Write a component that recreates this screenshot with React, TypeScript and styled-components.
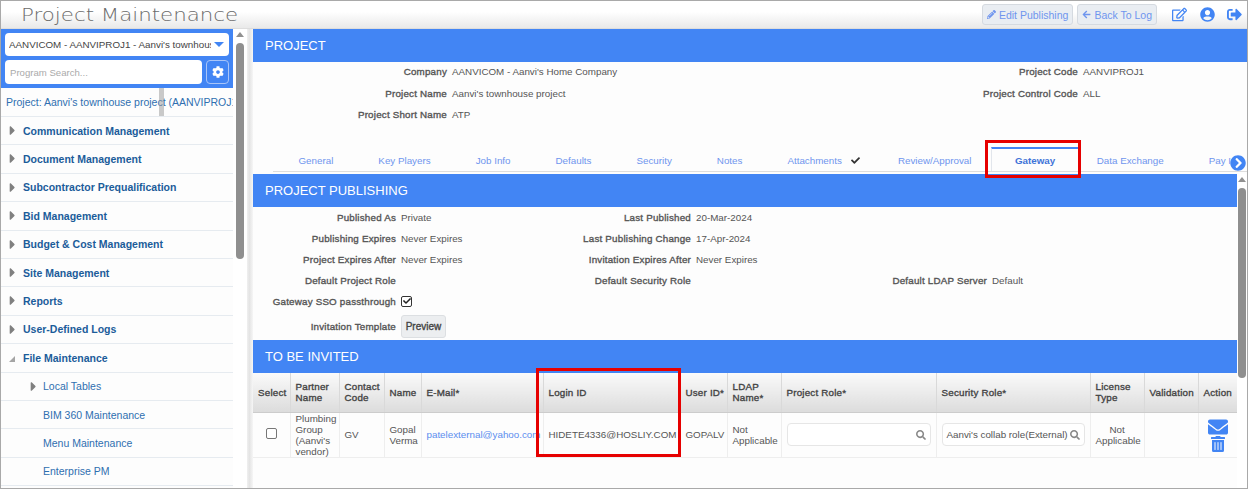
import { FunctionComponent } from 'react';
import styled, { createGlobalStyle } from 'styled-components';
import {
  FaArrowLeft,
  FaCaretRight,
  FaCheck,
  FaChevronCircleRight,
  FaCog,
  FaEnvelope,
  FaPencilAlt,
  FaRegEdit,
  FaSearch,
  FaSignOutAlt,
  FaTrashAlt,
  FaUserCircle,
} from 'react-icons/fa';

const BLUE = '#4285f4';

const GlobalStyle = createGlobalStyle`
  html, body {
    margin: 0;
    padding: 0;
    background: #fff;
  }
  * {
    box-sizing: border-box;
  }
`;

const Frame = styled.div`
  position: relative;
  width: 1248px;
  height: 489px;
  border: 1px solid #a9a9a9;
  overflow: hidden;
  display: flex;
  flex-direction: column;
  font-family: 'Liberation Sans', Arial, sans-serif;
  font-size: 9.8px;
  color: #555;
  background: #fdfdfd;
`;

const Header = styled.header`
  height: 28px;
  flex: none;
  display: flex;
  align-items: center;
  padding-left: 20px;
  background: linear-gradient(#fff 40%, #e9e9e9);
  border-bottom: 1px solid #ddd;
`;

const Title = styled.div`
  font-family: 'DejaVu Sans', sans-serif;
  font-size: 17px;
  font-weight: 200;
  color: #6b6b6b;
  transform: scaleX(1.255);
  transform-origin: left center;
  white-space: nowrap;
`;

const HeaderActions = styled.div`
  margin-left: auto;
  display: flex;
  align-items: center;
`;

const HeaderButton = styled.button`
  height: 21px;
  margin-right: 4px;
  padding: 0 4px;
  display: flex;
  align-items: center;
  gap: 3px;
  font-family: inherit;
  font-size: 10.5px;
  color: #6f95ee;
  background: #e9edf2;
  border: 1px solid #d5dae0;
  border-radius: 3px;
  svg {
    font-size: 9px;
  }
`;

const HeaderIcon = styled.span<{ $gap: number }>`
  display: flex;
  margin-left: ${(p) => p.$gap}px;
  color: ${BLUE};
  font-size: 15px;
`;

const Body = styled.div`
  flex: 1;
  min-height: 0;
  display: flex;
`;

const Sidebar = styled.aside`
  position: relative;
  width: 232px;
  flex: none;
  overflow: hidden;
`;

const SidebarTop = styled.div`
  height: 59px;
  padding: 4px 4px 0;
  background: ${BLUE};
  display: flex;
  flex-direction: column;
  gap: 4px;
`;

const ProjectSelect = styled.div`
  height: 23px;
  padding: 0 5px 0 4px;
  display: flex;
  align-items: center;
  justify-content: space-between;
  color: #444;
  background: #fff;
  border-radius: 4px;
  white-space: nowrap;
  overflow: hidden;
`;

const SelectText = styled.span`
  width: 202px;
  overflow: hidden;
`;

const Caret = styled.span`
  width: 0;
  height: 0;
  border-left: 5px solid transparent;
  border-right: 5px solid transparent;
  border-top: 5px solid ${BLUE};
`;

const SearchRow = styled.div`
  display: flex;
  gap: 4px;
`;

const SearchBox = styled.div`
  width: 197px;
  height: 24px;
  padding-left: 5px;
  display: flex;
  align-items: center;
  font-size: 9.6px;
  color: #aaa;
  background: #fff;
  border-radius: 4px;
`;

const GearButton = styled.div`
  width: 23px;
  height: 24px;
  display: flex;
  align-items: center;
  justify-content: center;
  color: #fff;
  font-size: 12px;
  border: 1px solid #a9c5f8;
  border-radius: 4px;
`;

const ProjectLink = styled.div`
  height: 29px;
  padding-left: 5px;
  display: flex;
  align-items: center;
  color: #2f6fb0;
  font-size: 10.5px;
  white-space: nowrap;
  overflow: hidden;
  border-bottom: 1px solid #e6ebf0;
`;

const ScrollGhost = styled.div`
  position: absolute;
  left: 158px;
  top: 59px;
  width: 5px;
  height: 28px;
  background: rgba(150, 150, 150, 0.5);
`;

const NavRow = styled.div<{ $child?: boolean }>`
  height: 28.4px;
  padding-left: ${(p) => (p.$child ? 42 : 22)}px;
  position: relative;
  display: flex;
  align-items: center;
  color: ${(p) => (p.$child ? '#2f6fb0' : '#1b5c9a')};
  font-size: 10.5px;
  font-weight: ${(p) => (p.$child ? 400 : 700)};
  white-space: nowrap;
  border-bottom: 1px solid #e6ebf0;
`;

const NavArrow = styled.span<{ $child?: boolean }>`
  position: absolute;
  left: ${(p) => (p.$child ? 25 : 4)}px;
  top: 6px;
  display: flex;
  color: #808080;
  font-size: 15px;
`;

const NavOpenArrow = styled.span`
  position: absolute;
  left: 8px;
  top: 12px;
  width: 0;
  height: 0;
  border-left: 6px solid transparent;
  border-bottom: 6px solid #a5a5a5;
`;

const LeftScroll = styled.div`
  width: 14px;
  flex: none;
  padding: 3px 2px 0;
  background: #fff;
`;

const ScrollUp = styled.div`
  width: 0;
  height: 0;
  margin: 0 auto 6px;
  border-left: 4px solid transparent;
  border-right: 4px solid transparent;
  border-bottom: 5px solid #909090;
`;

const ScrollThumb = styled.div<{ $height: number }>`
  width: 8px;
  height: ${(p) => p.$height}px;
  margin: 0 auto;
  background: #8f8f8f;
  border-radius: 4px;
`;

const Splitter = styled.div`
  width: 6px;
  flex: none;
  background: linear-gradient(90deg, #f0f0f0, #e4e4e4 40%, #f6f6f6);
`;

const Main = styled.main`
  position: relative;
  flex: 1;
  min-width: 0;
  display: flex;
  flex-direction: column;
`;

const SectionBar = styled.div<{ $gap?: number }>`
  height: 33px;
  flex: none;
  margin-top: ${(p) => p.$gap ?? 0}px;
  padding-left: 12px;
  display: flex;
  align-items: center;
  color: #fff;
  font-size: 13px;
  background: ${BLUE};
`;

const FieldGrid = styled.div<{ $columns: string; $rows?: string; $top: number; $rowGap: number }>`
  display: grid;
  grid-template-columns: ${(p) => p.$columns};
  grid-template-rows: ${(p) => p.$rows ?? 'none'};
  grid-auto-rows: 13px;
  row-gap: ${(p) => p.$rowGap}px;
  column-gap: 5px;
  align-items: center;
  padding-top: ${(p) => p.$top}px;
  white-space: nowrap;
`;

const Label = styled.div`
  text-align: right;
  letter-spacing: 0.2px;
  color: #555;
  -webkit-text-stroke: 0.35px #555;
`;

const Value = styled.div`
  color: #555;
`;

const CheckBox = styled.span<{ $checked?: boolean }>`
  width: 11px;
  height: 11px;
  display: inline-flex;
  align-items: center;
  justify-content: center;
  color: #222;
  font-size: 8px;
  background: #fff;
  border: 1px solid ${(p) => (p.$checked ? '#333' : '#777')};
  border-radius: 2px;
`;

const PreviewButton = styled.button`
  display: block;
  width: 45px;
  height: 23px;
  padding: 0;
  font-family: inherit;
  font-size: 10px;
  color: #444;
  -webkit-text-stroke: 0.35px #444;
  background: #eceef0;
  border: 1px solid #dcdfe2;
  border-radius: 3px;
`;

const TabRow = styled.div`
  height: 37px;
  margin-top: 14px;
  margin-left: 20px;
  padding-left: 3px;
  flex: none;
  display: flex;
  align-items: flex-end;
  border-bottom: 1px solid #ddd;
  white-space: nowrap;
`;

const Tab = styled.div<{ $active?: boolean; $pad?: number; $nudge?: number }>`
  height: 24px;
  margin-left: ${(p) => p.$nudge ?? 0}px;
  padding: 0 ${(p) => p.$pad ?? 21.5}px;
  flex: none;
  display: flex;
  align-items: center;
  gap: 9px;
  color: ${(p) => (p.$active ? '#3f73d8' : '#6f95ee')};
  font-weight: ${(p) => (p.$active ? 700 : 400)};
  border-top: 2px solid ${(p) => (p.$active ? BLUE : 'transparent')};
  border-left: 1px solid ${(p) => (p.$active ? '#e2e6ec' : 'transparent')};
  border-right: 1px solid ${(p) => (p.$active ? '#e2e6ec' : 'transparent')};
  svg {
    color: #333;
    font-size: 9px;
  }
`;

const TabNext = styled.span`
  position: absolute;
  right: 1px;
  top: 126px;
  display: flex;
  color: ${BLUE};
  font-size: 16px;
  background: #fff;
  border-radius: 50%;
`;

const Lower = styled.div`
  margin-top: 2px;
  flex: 1;
  min-height: 0;
  display: flex;
`;

const LowerContent = styled.div`
  width: 984px;
  flex: none;
`;

const RightScroll = styled.div`
  flex: 1;
  padding-top: 3px;
  background: #fff;
`;

const InviteTable = styled.table`
  width: 984px;
  table-layout: fixed;
  border-collapse: collapse;
  color: #555;
`;

const HeadCell = styled.th`
  height: 39px;
  padding: 0 0 0 5px;
  text-align: left;
  font-weight: 400;
  line-height: 11px;
  letter-spacing: 0.2px;
  color: #444;
  -webkit-text-stroke: 0.35px #444;
  background: linear-gradient(#fafafa, #dcdcdc);
  border-right: 1px solid #d9d9d9;
  border-bottom: 1px solid #ccc;
`;

const Cell = styled.td<{ $center?: boolean }>`
  height: 45px;
  padding: 0 5px;
  text-align: ${(p) => (p.$center ? 'center' : 'left')};
  line-height: 11px;
  white-space: normal;
  border-right: 1px solid #eee;
  border-bottom: 1px solid #eee;
`;

const EmailLink = styled.span`
  color: #5b8def;
  white-space: nowrap;
`;

const RoleInput = styled.div`
  height: 23px;
  padding: 0 4px;
  display: flex;
  align-items: center;
  justify-content: space-between;
  white-space: nowrap;
  background: #fff;
  border: 1px solid #e6e6e6;
  border-radius: 4px;
  svg {
    color: #888;
    font-size: 10px;
  }
`;

const ActionIcons = styled.div`
  display: flex;
  flex-direction: column;
  align-items: center;
  color: ${BLUE};
  svg:first-child {
    font-size: 20px;
    margin-bottom: -1px;
  }
  svg:last-child {
    font-size: 16px;
  }
`;

const Callout = styled.div<{ $left: number; $top: number; $width: number; $height: number }>`
  position: absolute;
  left: ${(p) => p.$left}px;
  top: ${(p) => p.$top}px;
  width: ${(p) => p.$width}px;
  height: ${(p) => p.$height}px;
  border: 3px solid #e60000;
  pointer-events: none;
`;

const navItems = [
  'Communication Management',
  'Document Management',
  'Subcontractor Prequalification',
  'Bid Management',
  'Budget & Cost Management',
  'Site Management',
  'Reports',
  'User-Defined Logs',
];

const tabs = ['General', 'Key Players', 'Job Info', 'Defaults', 'Security', 'Notes'];

const columns: [string, number][] = [
  ['Select', 37],
  ['Partner Name', 49],
  ['Contact Code', 45],
  ['Name', 37],
  ['E-Mail*', 122],
  ['Login ID', 137],
  ['User ID*', 47],
  ['LDAP Name*', 54],
  ['Project Role*', 155],
  ['Security Role*', 154],
  ['License Type', 54],
  ['Validation', 54],
  ['Action', 39],
];

const App: FunctionComponent = () => (
  <Frame>
    <GlobalStyle />
    <Header>
      <Title>Project Maintenance</Title>
      <HeaderActions>
        <HeaderButton>
          <FaPencilAlt />
          Edit Publishing
        </HeaderButton>
        <HeaderButton>
          <FaArrowLeft />
          Back To Log
        </HeaderButton>
        <HeaderIcon $gap={11}>
          <FaRegEdit />
        </HeaderIcon>
        <HeaderIcon $gap={13}>
          <FaUserCircle />
        </HeaderIcon>
        <HeaderIcon $gap={12}>
          <FaSignOutAlt />
        </HeaderIcon>
        <HeaderIcon $gap={5} />
      </HeaderActions>
    </Header>
    <Body>
      <Sidebar>
        <SidebarTop>
          <ProjectSelect>
            <SelectText>AANVICOM - AANVIPROJ1 - Aanvi's townhouse project</SelectText>
            <Caret />
          </ProjectSelect>
          <SearchRow>
            <SearchBox>Program Search...</SearchBox>
            <GearButton>
              <FaCog />
            </GearButton>
          </SearchRow>
        </SidebarTop>
        <ProjectLink>Project: Aanvi's townhouse project (AANVIPROJ1)</ProjectLink>
        <ScrollGhost />
        {navItems.map((item) => (
          <NavRow key={item}>
            <NavArrow>
              <FaCaretRight />
            </NavArrow>
            {item}
          </NavRow>
        ))}
        <NavRow>
          <NavOpenArrow />
          File Maintenance
        </NavRow>
        <NavRow $child>
          <NavArrow $child>
            <FaCaretRight />
          </NavArrow>
          Local Tables
        </NavRow>
        <NavRow $child>BIM 360 Maintenance</NavRow>
        <NavRow $child>Menu Maintenance</NavRow>
        <NavRow $child>Enterprise PM</NavRow>
      </Sidebar>
      <LeftScroll>
        <ScrollUp />
        <ScrollThumb $height={216} />
      </LeftScroll>
      <Splitter />
      <Main>
        <SectionBar>PROJECT</SectionBar>
        <FieldGrid $columns="194px 522px 99px 1fr" $top={3} $rowGap={8.5}>
          <Label>Company</Label>
          <Value>AANVICOM - Aanvi's Home Company</Value>
          <Label>Project Code</Label>
          <Value>AANVIPROJ1</Value>
          <Label>Project Name</Label>
          <Value>Aanvi's townhouse project</Value>
          <Label>Project Control Code</Label>
          <Value>ALL</Value>
          <Label>Project Short Name</Label>
          <Value>ATP</Value>
        </FieldGrid>
        <TabRow>
          {tabs.map((tab) => (
            <Tab key={tab}>{tab}</Tab>
          ))}
          <Tab>
            Attachments
            <FaCheck />
          </Tab>
          <Tab $nudge={-7}>Review/Approval</Tab>
          <Tab $active $pad={23} $nudge={-3}>
            Gateway
          </Tab>
          <Tab $nudge={-5}>Data Exchange</Tab>
          <Tab>Pay I</Tab>
        </TabRow>
        <TabNext>
          <FaChevronCircleRight />
        </TabNext>
        <Lower>
          <LowerContent>
            <SectionBar>PROJECT PUBLISHING</SectionBar>
            <FieldGrid
              $columns="143px 100px 185px 100px 186px 1fr"
              $rows="repeat(5, 13px) 20px"
              $top={4}
              $rowGap={8}
            >
              <Label>Published As</Label>
              <Value>Private</Value>
              <Label>Last Published</Label>
              <Value>20-Mar-2024</Value>
              <span />
              <span />
              <Label>Publishing Expires</Label>
              <Value>Never Expires</Value>
              <Label>Last Publishing Change</Label>
              <Value>17-Apr-2024</Value>
              <span />
              <span />
              <Label>Project Expires After</Label>
              <Value>Never Expires</Value>
              <Label>Invitation Expires After</Label>
              <Value>Never Expires</Value>
              <span />
              <span />
              <Label>Default Project Role</Label>
              <Value />
              <Label>Default Security Role</Label>
              <Value />
              <Label>Default LDAP Server</Label>
              <Value>Default</Value>
              <Label>Gateway SSO passthrough</Label>
              <Value>
                <CheckBox $checked>
                  <FaCheck />
                </CheckBox>
              </Value>
              <span />
              <span />
              <span />
              <span />
              <Label>Invitation Template</Label>
              <Value>
                <PreviewButton>Preview</PreviewButton>
              </Value>
            </FieldGrid>
            <SectionBar $gap={4}>TO BE INVITED</SectionBar>
            <InviteTable>
              <colgroup>
                {columns.map(([name, width]) => (
                  <col key={name} width={width} />
                ))}
              </colgroup>
              <thead>
                <tr>
                  {columns.map(([name]) => (
                    <HeadCell key={name}>{name}</HeadCell>
                  ))}
                </tr>
              </thead>
              <tbody>
                <tr>
                  <Cell $center>
                    <CheckBox />
                  </Cell>
                  <Cell>Plumbing Group (Aanvi's vendor)</Cell>
                  <Cell>GV</Cell>
                  <Cell>Gopal Verma</Cell>
                  <Cell>
                    <EmailLink>patelexternal@yahoo.com</EmailLink>
                  </Cell>
                  <Cell>HIDETE4336@HOSLIY.COM</Cell>
                  <Cell>GOPALV</Cell>
                  <Cell>Not Applicable</Cell>
                  <Cell>
                    <RoleInput>
                      <span />
                      <FaSearch />
                    </RoleInput>
                  </Cell>
                  <Cell>
                    <RoleInput>
                      Aanvi's collab role(External)
                      <FaSearch />
                    </RoleInput>
                  </Cell>
                  <Cell $center>Not Applicable</Cell>
                  <Cell />
                  <Cell>
                    <ActionIcons>
                      <FaEnvelope />
                      <FaTrashAlt />
                    </ActionIcons>
                  </Cell>
                </tr>
              </tbody>
            </InviteTable>
          </LowerContent>
          <RightScroll>
            <ScrollUp />
            <ScrollThumb $height={190} />
          </RightScroll>
        </Lower>
      </Main>
    </Body>
    <Callout $left={984} $top={139} $width={96} $height={38} />
    <Callout $left={535} $top={367} $width={145} $height={89} />
  </Frame>
);

export default App;
